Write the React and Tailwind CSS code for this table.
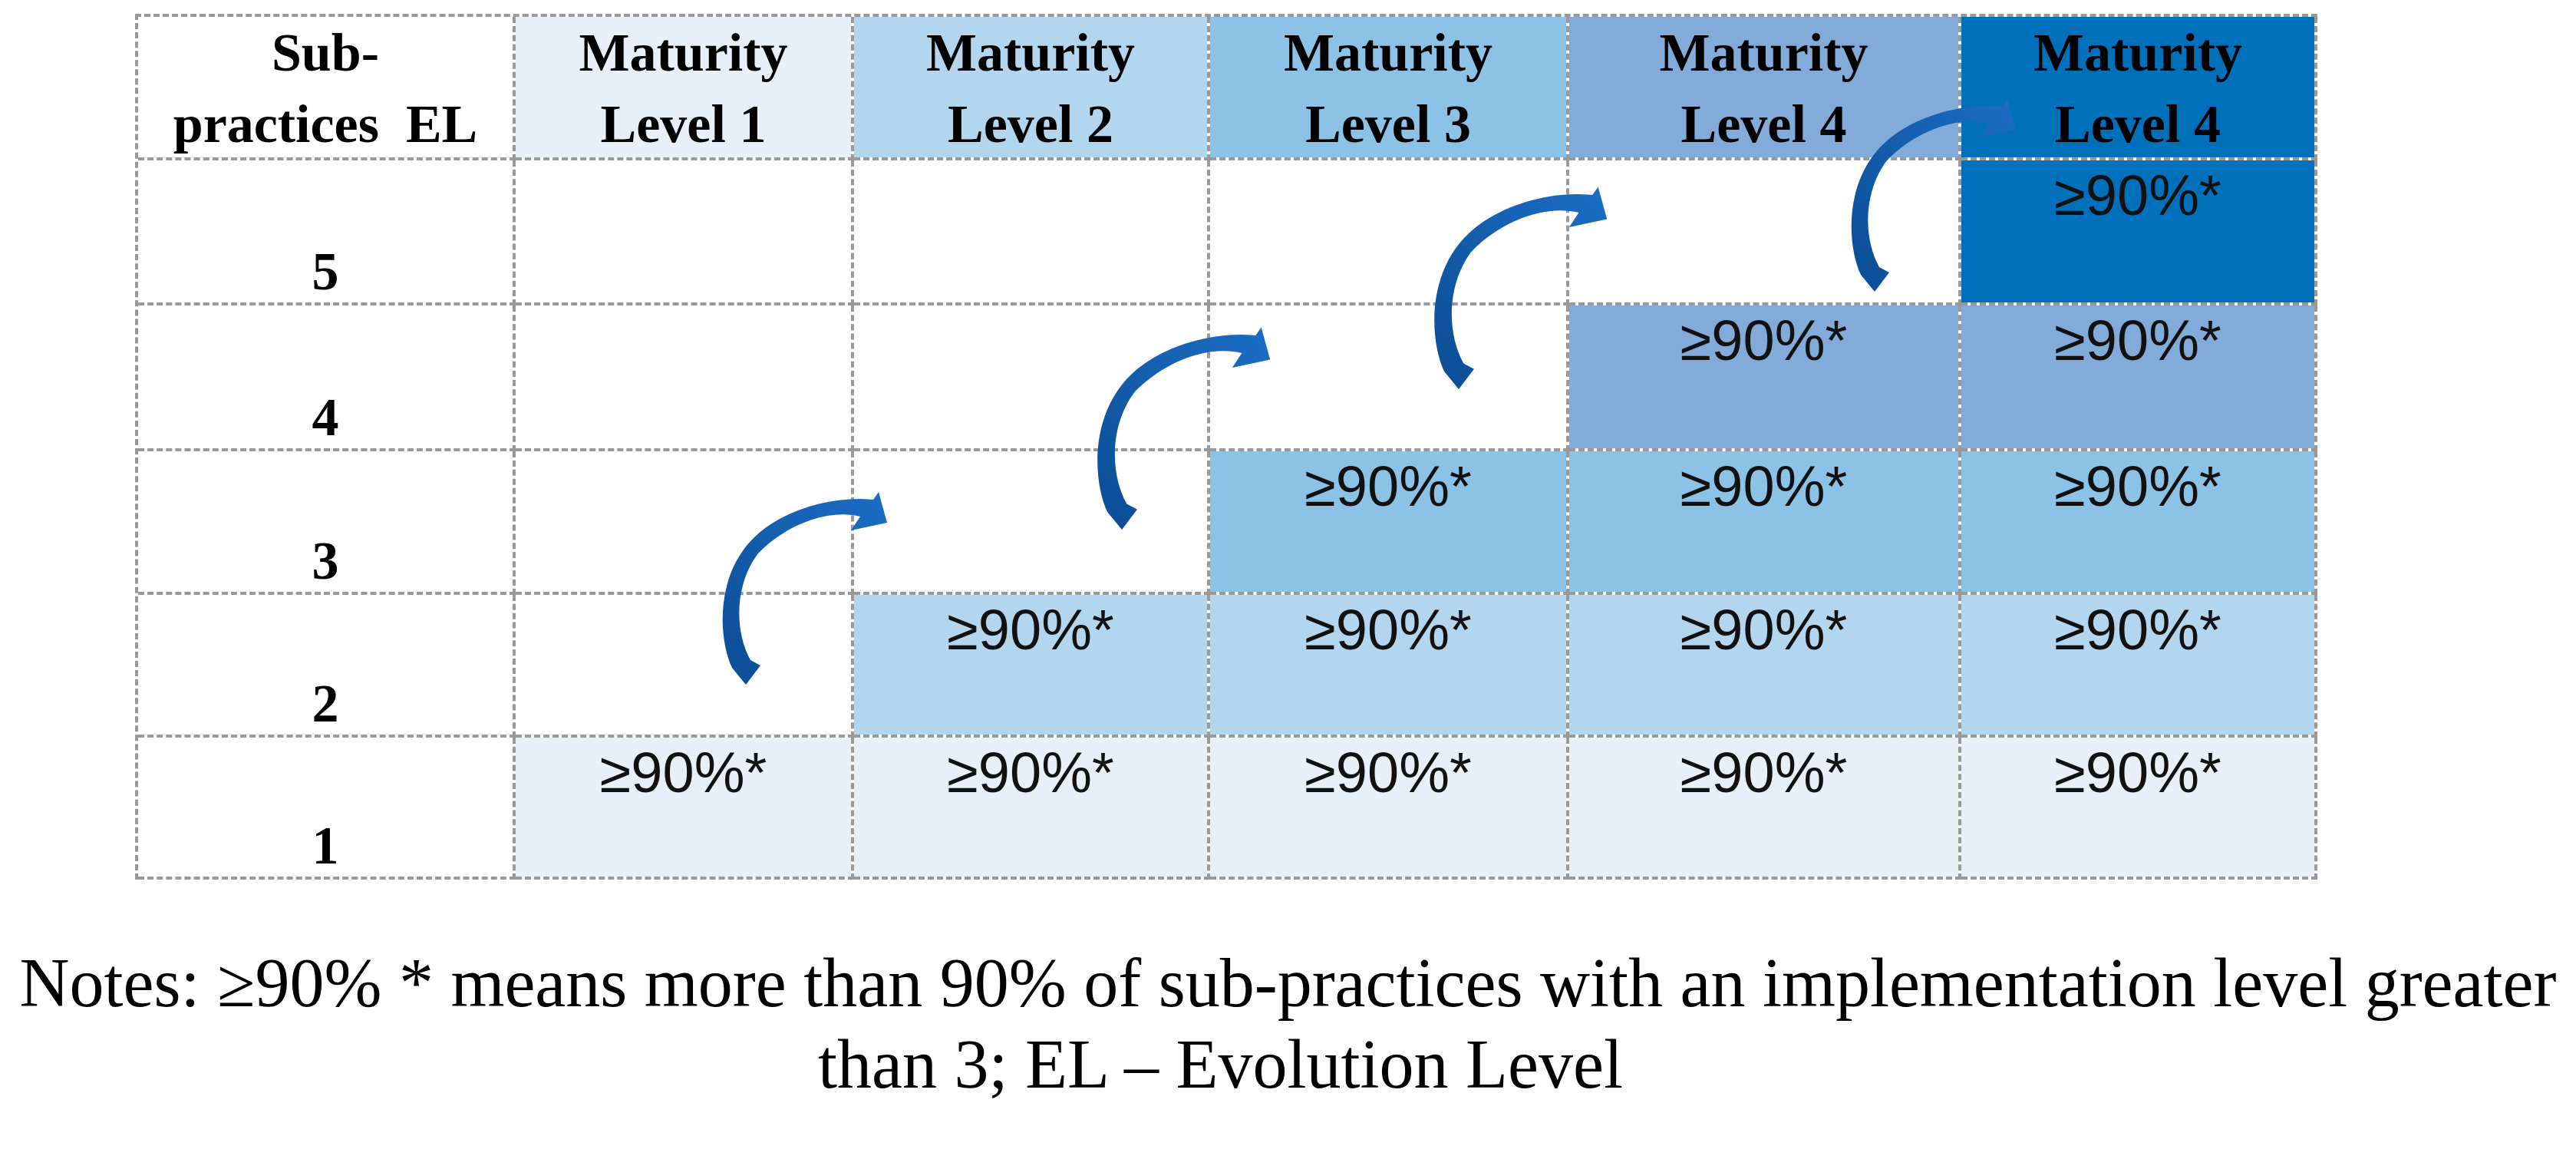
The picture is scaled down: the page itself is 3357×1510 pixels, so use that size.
import React from 'react';

const levelBg = {
    1: 'bg-[#e8eff9]',
    2: 'bg-[#b3d6ee]',
    3: 'bg-[#8bc2e6]',
    4: 'bg-[#82abda]',
    5: 'bg-[#0070ba]',
};

const cellBase = 'border-r-[4px] border-b-[4px] border-dashed border-[#999999] bg-clip-padding';
const serifBold = "font-['Liberation_Serif',serif] font-bold text-[70px] text-black";
const dataText = "font-['Liberation_Sans',sans-serif] text-[74px] leading-none text-[#111]";

const headers = ['Level 1', 'Level 2', 'Level 3', 'Level 4', 'Level 4'];
const rows = [5, 4, 3, 2, 1];

// tail tip sits at 0,0; band curves up-left then over to the head on the right
const ARROW_D =
    'M0,0 L-18,-22 C-36,-60 -42,-150 20,-200 C60,-232 120,-246 166,-241 L173,-251 L184,-211 L137,-201 L149,-219 C110,-229 55,-211 16,-171 C-15,-130 -15,-70 6,-32 L19,-25 Z';

const arrows = [
    { id: 'a1', transform: 'translate(972 892)' },
    { id: 'a2', transform: 'translate(1462 690) scale(1.05)' },
    { id: 'a3', transform: 'translate(1901 507) scale(1.05)' },
    { id: 'a4', transform: 'translate(2443 380)' },
];

function HeaderCell({ label, level }) {
    return (
        <div className={`${cellBase} ${levelBg[level]} flex flex-col items-center ${serifBold} leading-[93px]`}>
            <span>Maturity</span>
            <span>{label}</span>
        </div>
    );
}

function RowLabel({ value }) {
    return (
        <div className={`${cellBase} bg-white flex items-end justify-center pb-[5px]`}>
            <span className={`${serifBold} leading-none`}>{value}</span>
        </div>
    );
}

function DataCell({ row, col }) {
    const filled = col >= row;
    return (
        <div className={`${cellBase} ${filled ? levelBg[row] : 'bg-white'} flex justify-center pt-[9px]`}>
            {filled && <span className={dataText}>≥90%*</span>}
        </div>
    );
}

export default function App() {
    return (
        <div className="relative w-[3357px] h-[1510px] overflow-hidden bg-white">
            <div className="pt-[18px] pl-[176px]">
                <div className="grid w-max grid-cols-[492px_441px_464px_468px_511px_464px] grid-rows-[187px_189px_190px_187px_186px_185px] border-l-[4px] border-t-[4px] border-dashed border-[#999999] bg-white">
                    <div className={`${cellBase} bg-white flex flex-col items-center ${serifBold} leading-[93px]`}>
                        <span>Sub-</span>
                        <span className="whitespace-pre">practices  EL</span>
                    </div>
                    {headers.map((label, i) => (
                        <HeaderCell key={i} label={label} level={i + 1} />
                    ))}

                    {rows.map((row) => (
                        <React.Fragment key={row}>
                            <RowLabel value={row} />
                            {[1, 2, 3, 4, 5].map((col) => (
                                <DataCell key={col} row={row} col={col} />
                            ))}
                        </React.Fragment>
                    ))}
                </div>
            </div>

            <div className="mt-[82px] font-['Liberation_Serif',serif] text-[90px] leading-[106px] text-black">
                <p className="text-center whitespace-nowrap">
                    Notes: ≥90% * means more than 90% of sub-practices with an implementation level greater
                </p>
                <p className="pr-[176px] text-center whitespace-nowrap">than 3; EL – Evolution Level</p>
            </div>

            <svg
                className="pointer-events-none absolute left-0 top-0 h-[1510px] w-[3357px]"
                viewBox="0 0 3357 1510"
            >
                <defs>
                    <linearGradient id="arrowFill" x1="0" y1="1" x2="1" y2="0">
                        <stop offset="0" stopColor="#0b4c94" />
                        <stop offset="0.55" stopColor="#155fae" />
                        <stop offset="1" stopColor="#1b6dc7" />
                    </linearGradient>
                </defs>
                {arrows.map((a) => (
                    <path key={a.id} d={ARROW_D} transform={a.transform} fill="url(#arrowFill)" />
                ))}
            </svg>
        </div>
    );
}
